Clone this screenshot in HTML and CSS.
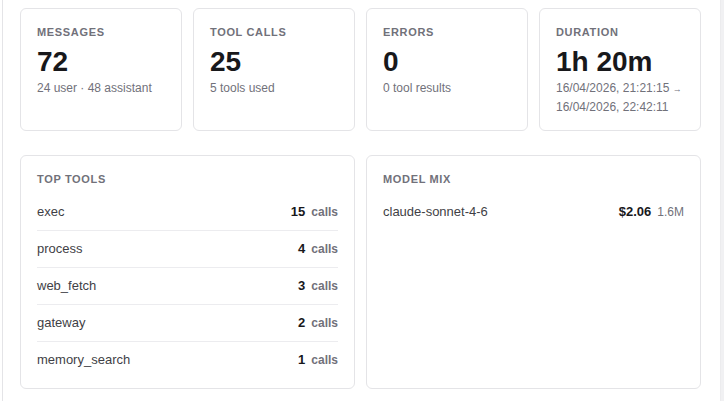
FILE: index.html
```html
<!DOCTYPE html>
<html lang="en">
<head>
<meta charset="utf-8">
<title>Session stats</title>
<link rel="stylesheet" href="styles.css">
</head>
<body>
<div class="page">
  <main class="panel">
    <section class="stats">
      <div class="card stat">
        <div class="label">Messages</div>
        <div class="big">72</div>
        <div class="sub">24 user · 48 assistant</div>
      </div>
      <div class="card stat">
        <div class="label">Tool calls</div>
        <div class="big">25</div>
        <div class="sub">5 tools used</div>
      </div>
      <div class="card stat">
        <div class="label">Errors</div>
        <div class="big">0</div>
        <div class="sub">0 tool results</div>
      </div>
      <div class="card stat">
        <div class="label">Duration</div>
        <div class="big">1h 20m</div>
        <div class="sub"><span class="line">16/04/2026, 21:21:15 <span class="arrow">→</span></span><span class="line">16/04/2026, 22:42:11</span></div>
      </div>
    </section>
    <section class="details">
      <div class="card list-card">
        <div class="label">Top tools</div>
        <ul class="rows">
          <li class="row"><span class="name">exec</span><span class="val"><b>15</b><span class="unit">calls</span></span></li>
          <li class="row"><span class="name">process</span><span class="val"><b>4</b><span class="unit">calls</span></span></li>
          <li class="row"><span class="name">web_fetch</span><span class="val"><b>3</b><span class="unit">calls</span></span></li>
          <li class="row"><span class="name">gateway</span><span class="val"><b>2</b><span class="unit">calls</span></span></li>
          <li class="row"><span class="name">memory_search</span><span class="val"><b>1</b><span class="unit">calls</span></span></li>
        </ul>
      </div>
      <div class="card list-card">
        <div class="label">Model mix</div>
        <ul class="rows">
          <li class="row"><span class="name">claude-sonnet-4-6</span><span class="val"><b>$2.06</b><span class="unit light">1.6M</span></span></li>
        </ul>
      </div>
    </section>
  </main>
  <div class="rail"></div>
</div>
</body>
</html>
```
FILE: styles.css
```css
* { box-sizing: border-box; }
html, body { margin: 0; padding: 0; background: #fff; }
body {
  font-family: "Liberation Sans", Arial, sans-serif;
  color: #18181b;
  height: 401px;
  overflow: hidden;
}
.page {
  display: flex;
  height: 401px;
  padding-left: 2px;
}
.panel {
  flex: 1;
  border-left: 1px solid #e4e4e7;
  padding: 8px 19px 0 17px;
}
.rail {
  width: 4px;
  background: #f1f1f3;
  border-left: 1px solid #ececee;
}
.stats {
  display: grid;
  grid-template-columns: repeat(4, 1fr);
  gap: 11px;
}
.card {
  border: 1px solid #e4e4e7;
  border-radius: 6px;
  padding: 16px;
  background: #fff;
}
.stat { padding-bottom: 14px; }
.label {
  font-size: 11px;
  line-height: 14px;
  font-weight: 700;
  letter-spacing: 0.06em;
  text-transform: uppercase;
  color: #71717a;
}
.big {
  margin-top: 6px;
  font-size: 28px;
  line-height: 34px;
  font-weight: 700;
  color: #18181b;
}
.sub {
  margin-top: 0;
  font-size: 12px;
  line-height: 18px;
  color: #71717a;
}
.line {
  display: block;
  white-space: nowrap;
}
.arrow {
  font-size: 9px;
}
.details {
  margin-top: 24px;
  display: grid;
  grid-template-columns: 1fr 1fr;
  gap: 11px;
}
.list-card { padding: 16px 16px 10px; }
.rows {
  list-style: none;
  margin: 8px 0 0;
  padding: 0;
}
.row {
  display: flex;
  justify-content: space-between;
  align-items: center;
  padding: 9px 0;
  line-height: 18px;
  font-size: 13px;
  border-bottom: 1px solid #ececef;
}
.row:last-child { border-bottom: none; }
.name { color: #3f3f46; }
.val {
  display: flex;
  align-items: baseline;
  gap: 6px;
}
.val b {
  font-size: 13px;
  font-weight: 700;
  color: #18181b;
}
.unit {
  font-size: 12px;
  font-weight: 700;
  color: #71717a;
}
.unit.light { font-weight: 400; }
```
